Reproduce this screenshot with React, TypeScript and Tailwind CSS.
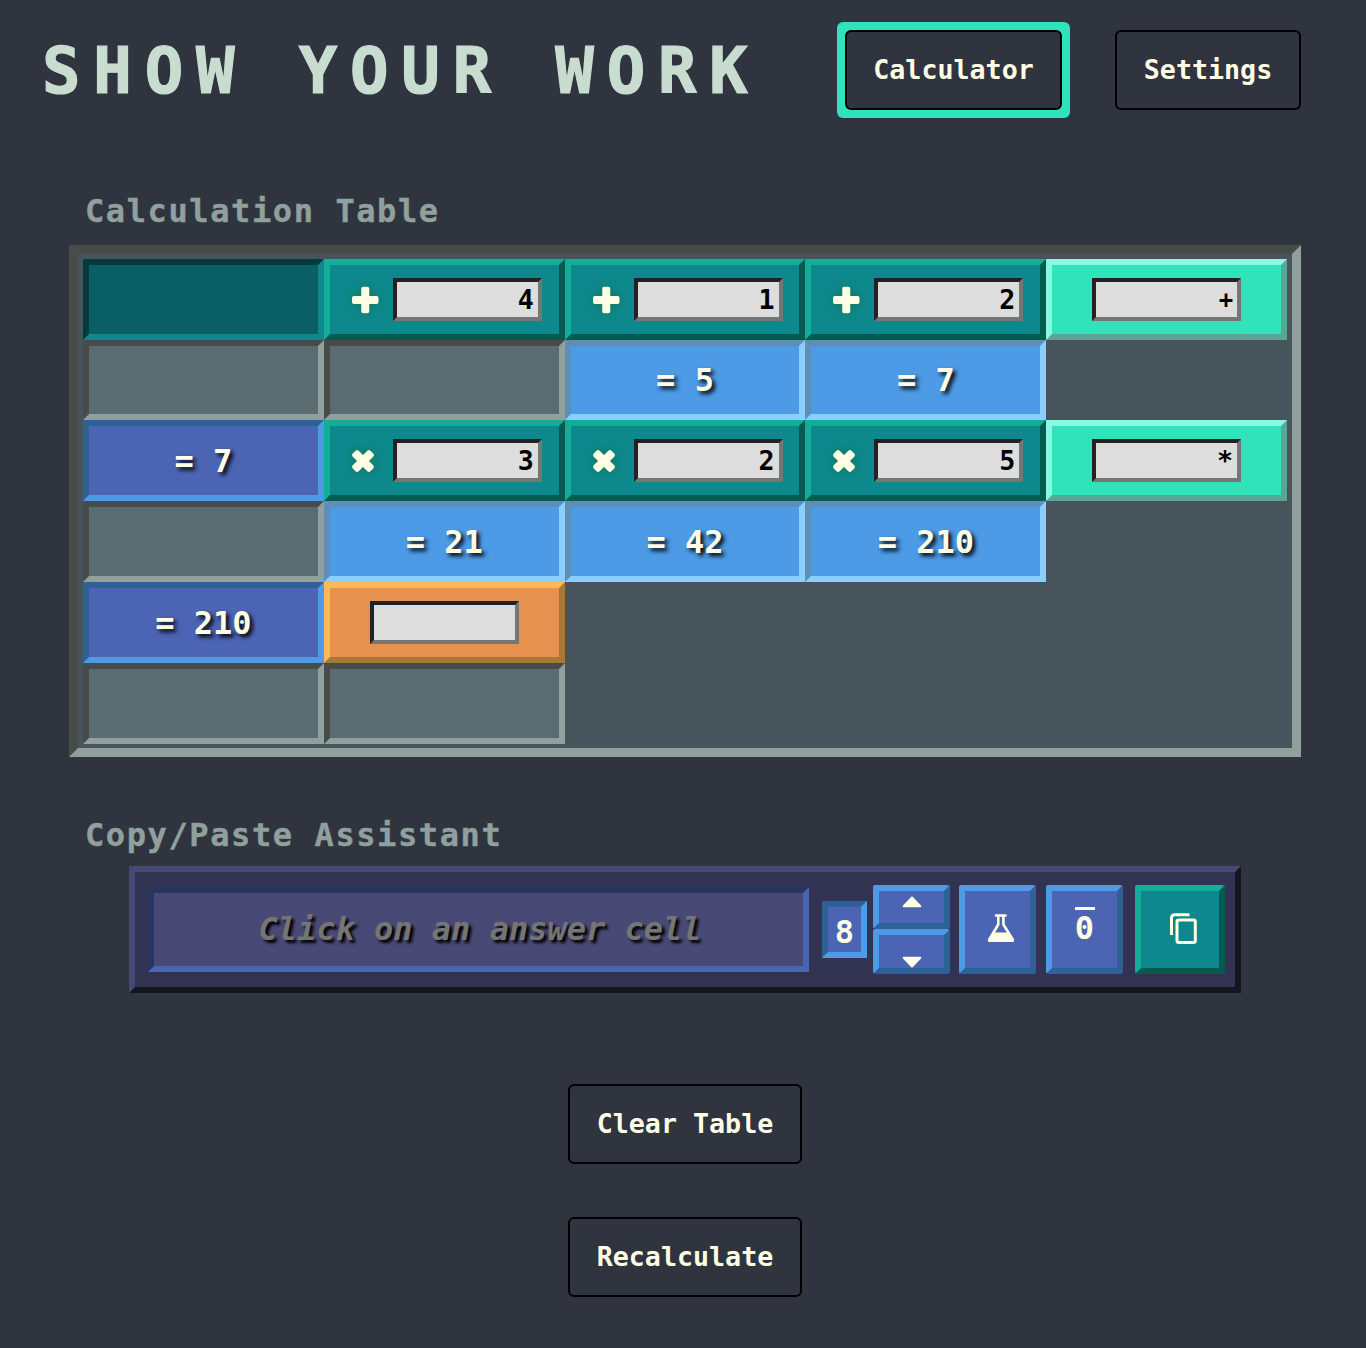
import type { ReactNode } from "react";

const tones = {
  corner: "bg-[#095f64] border-t-[#053a3c] border-l-[#053a3c] border-r-[#0d888c] border-b-[#0d888c]",
  teal: "bg-[#0d888c] border-t-[#14ad98] border-l-[#14ad98] border-r-[#045b50] border-b-[#045b50]",
  mint: "bg-[#31e3bb] border-t-[#8af8e0] border-l-[#8af8e0] border-r-[#5ca595] border-b-[#5ca595]",
  gray: "bg-[#5b6b72] border-t-[#474b4a] border-l-[#474b4a] border-r-[#8fa09d] border-b-[#8fa09d]",
  sky: "bg-[#4d9ae6] border-t-[#5f8fb5] border-l-[#5f8fb5] border-r-[#8ccfff] border-b-[#8ccfff]",
  indigo: "bg-[#4c64b4] border-t-[#2f6196] border-l-[#2f6196] border-r-[#4e9ae6] border-b-[#4e9ae6]",
  orange: "bg-[#e6914f] border-t-[#fdb957] border-l-[#fdb957] border-r-[#a67a35] border-b-[#a67a35]",
  raised: "bg-[#4c64b4] border-t-[#4e9ae6] border-l-[#4e9ae6] border-r-[#2f6196] border-b-[#2f6196]",
};

function Cell({ tone, center = true, children }: { tone: keyof typeof tones; center?: boolean; children?: ReactNode }) {
  return (
    <div className={`flex items-center border-[6px] ${center ? "justify-center" : ""} ${tones[tone]}`}>{children}</div>
  );
}

function Field({ value, small = false }: { value: string; small?: boolean }) {
  return (
    <input
      readOnly
      value={value}
      className={`h-[43px] w-[149px] shrink-0 rounded-none border-4 border-t-[#222] border-r-[#767676] border-b-[#767676] border-l-[#222] bg-[#ddd] py-0 pr-1 pl-1 text-right font-bold text-black outline-none ${small ? "text-[24px]" : "text-[26.67px]"}`}
    />
  );
}

function PlusIcon() {
  return (
    <svg viewBox="0 0 28 28" className="ml-[21px] h-7 w-7" fill="currentColor">
      <rect x="1" y="10" width="26.500" height="8" rx="2" />
      <rect x="10.250" y="0.700" width="8" height="26.500" rx="2" />
    </svg>
  );
}

function TimesIcon() {
  return (
    <svg viewBox="0 0 28 28" className="ml-[19px] h-7 w-7" fill="currentColor">
      <g transform="rotate(45 14 14)">
        <rect x="1.500" y="9.800" width="25" height="8.400" rx="2.200" />
        <rect x="9.800" y="1.500" width="8.400" height="25" rx="2.200" />
      </g>
    </svg>
  );
}

function Operation({ op, value }: { op: "plus" | "times"; value: string }) {
  return (
    <Cell tone="teal" center={false}>
      <span className="flex w-[63px] shrink-0 text-[#fffee5] [filter:drop-shadow(0_0_4px_rgba(22,110,60,0.7))]">
        {op === "plus" ? <PlusIcon /> : <TimesIcon />}
      </span>
      <Field value={value} />
    </Cell>
  );
}

function Answer({ tone, value }: { tone: "sky" | "indigo"; value: string }) {
  return (
    <Cell tone={tone}>
      <span className="text-[32px] leading-none font-bold whitespace-pre text-[#fffee5] [text-shadow:3px_3px_4px_#000]">
        {`= ${value}`}
      </span>
    </Cell>
  );
}

function OutlineButton({ className, children }: { className: string; children: ReactNode }) {
  return (
    <button className={`h-20 rounded-md border-2 border-black bg-[#30343f] text-[26.67px] font-bold text-[#fffee5] ${className}`}>
      {children}
    </button>
  );
}

function Caret({ className }: { className: string }) {
  return (
    <svg viewBox="0 0 20 12" className={`h-3 w-5 shrink-0 ${className}`} fill="#fffee5" stroke="#fffee5" strokeWidth="2" strokeLinejoin="round">
      <path d="M10 1.500L18.300 10.300H1.700z" />
    </svg>
  );
}

function FlaskIcon() {
  return (
    <svg viewBox="0 0 28 28" className="mb-[3px] ml-[7px] h-7 w-7" fill="none" stroke="#fffee5" strokeWidth="2.6" strokeLinejoin="round" strokeLinecap="round">
      <path d="M9 1.500h9.500" />
      <path d="M11.300 2v8.500L2.200 25.700c-.3.600 0 1 .6 1h22.400c.6 0 .9-.4.6-1L16.400 10.500V2" />
      <path d="M7.600 18.600h12.800l4.600 7.500H3z" fill="#fffee5" stroke="none" />
    </svg>
  );
}

function CopyIcon() {
  return (
    <svg viewBox="0 0 27 31" className="mb-[2px] ml-[6px] h-[31px] w-[27px]" fill="none" stroke="#fffee5" strokeWidth="3">
      <path d="M19.500 1.700H4.500a3 3 0 0 0-3 3V22" />
      <rect x="7" y="7" width="18.300" height="22.500" rx="1.800" />
    </svg>
  );
}

export default function App() {
  return (
    <div className="h-[1348px] w-[1366px] overflow-hidden bg-[#30343f] pt-[30px] pl-[69px] font-['DejaVu_Sans_Mono',monospace]">
      <header className="-ml-[32px] flex h-20 w-[1264px] items-center">
        <h1 className="w-[800px] pt-[2px] pl-[5px] text-[64px] leading-none font-bold tracking-[0.2em] whitespace-nowrap text-[#c8ddd0] [-webkit-text-stroke:1.2px_#c8ddd0]">
          SHOW YOUR WORK
        </h1>
        <div className="rounded-md bg-[#31e3bb] p-2">
          <OutlineButton className="block w-[217px]">Calculator</OutlineButton>
        </div>
        <OutlineButton className="ml-[45px] w-[186px]">Settings</OutlineButton>
      </header>

      <main className="w-[1232px]">
        <h2 className="mt-[80px] ml-4 h-[55px] text-[32px] leading-[42px] font-bold tracking-[0.05em] text-[#8fa09d] [-webkit-text-stroke:0.4px_#8fa09d]">
          Calculation Table
        </h2>
        <section className="grid h-[512px] grid-cols-5 grid-rows-[81px_80px_81px_81px_81px_81px] border-[9px] border-t-[#474b4a] border-r-[#8fa09d] border-b-[#8fa09d] border-l-[#474b4a] bg-[#48545c] p-[5px]">
          <Cell tone="corner" />
          <Operation op="plus" value="4" />
          <Operation op="plus" value="1" />
          <Operation op="plus" value="2" />
          <Cell tone="mint"><Field value="+" small /></Cell>

          <Cell tone="gray" />
          <Cell tone="gray" />
          <Answer tone="sky" value="5" />
          <Answer tone="sky" value="7" />
          <div />

          <Answer tone="indigo" value="7" />
          <Operation op="times" value="3" />
          <Operation op="times" value="2" />
          <Operation op="times" value="5" />
          <Cell tone="mint"><Field value="*" /></Cell>

          <Cell tone="gray" />
          <Answer tone="sky" value="21" />
          <Answer tone="sky" value="42" />
          <Answer tone="sky" value="210" />
          <div />

          <Answer tone="indigo" value="210" />
          <Cell tone="orange"><Field value="" /></Cell>
          <div className="col-span-3" />

          <Cell tone="gray" />
          <Cell tone="gray" />
        </section>

        <h2 className="mt-[57px] ml-4 h-[52px] text-[32px] leading-[42px] font-bold tracking-[0.05em] text-[#8fa09d] [-webkit-text-stroke:0.4px_#8fa09d]">
          Copy/Paste Assistant
        </h2>
        <section className="ml-[60px] flex h-[127px] w-[1112px] items-start border-[6px] border-t-[#484875] border-r-[#15151f] border-b-[#15151f] border-l-[#484875] bg-[#323252] pt-[13px] pl-[13px]">
          <div className="mt-[2px] flex h-[85px] w-[661px] items-center justify-center border-[6px] border-t-[#27355f] border-r-[#4c64b4] border-b-[#4c64b4] border-l-[#27355f] bg-[#494976] pb-[2px] pl-[3px] text-[32px] font-bold text-[#757575] italic [text-shadow:3px_3px_3px_#000]">
            Click on an answer cell
          </div>
          <div className={`mt-4 ml-[13px] flex h-[57px] w-[45px] items-center justify-center border-[6px] pt-1 text-[32px] leading-none font-bold text-[#fffee5] ${tones.indigo}`}>
            8
          </div>
          <div className="ml-[6px] flex w-[77px] flex-col">
            <button className={`flex h-[44px] items-start justify-center rounded-[3px] border-[6px] pt-[5px] ${tones.raised}`}>
              <Caret className="" />
            </button>
            <button className={`flex h-[45px] items-end justify-center rounded-[3px] border-[6px] ${tones.raised}`}>
              <Caret className="rotate-180" />
            </button>
          </div>
          <button className={`ml-[9px] flex h-[89px] w-[77px] items-center justify-center rounded-[3px] border-[6px] ${tones.raised}`}>
            <FlaskIcon />
          </button>
          <button className={`ml-[10px] flex h-[89px] w-[77px] flex-col items-center rounded-[3px] border-[6px] pt-4 text-[32px] leading-[36px] font-bold text-[#fffee5] ${tones.raised}`}>
            <span className="block h-[3px] w-5 bg-[#fffee5]" />
            <span>0</span>
          </button>
          <button className={`ml-[12px] flex h-[89px] w-[90px] items-center justify-center rounded-[3px] border-[6px] ${tones.teal}`}>
            <CopyIcon />
          </button>
        </section>

        <div className="mt-[91px] flex flex-col items-center gap-[53px]">
          <OutlineButton className="w-[234px]">Clear Table</OutlineButton>
          <OutlineButton className="w-[234px]">Recalculate</OutlineButton>
        </div>
      </main>
    </div>
  );
}
